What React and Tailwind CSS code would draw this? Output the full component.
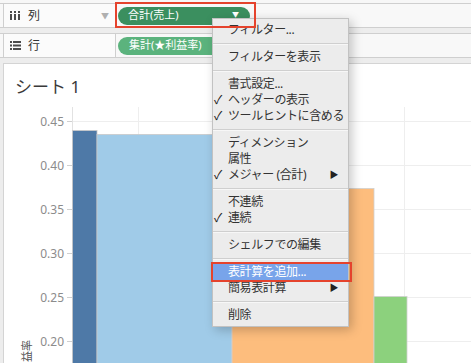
import React from 'react'

// Tableau 風: 列/行シェルフ + 棒グラフ + ピルのコンテキストメニュー
const MENU = [
  { t: 'フィルター...' },
  { sep: true },
  { t: 'フィルターを表示' },
  { sep: true },
  { t: '書式設定...' },
  { t: 'ヘッダーの表示', check: true },
  { t: 'ツールヒントに含める', check: true },
  { sep: true },
  { t: 'ディメンション' },
  { t: '属性' },
  { t: 'メジャー (合計)', check: true, sub: true },
  { sep: true },
  { t: '不連続' },
  { t: '連続', check: true },
  { sep: true },
  { t: 'シェルフでの編集' },
  { sep: true },
  { t: '表計算を追加...', active: true },
  { t: '簡易表計算', sub: true },
  { sep: true },
  { t: '削除' },
]

const TICKS = ['0.45', '0.40', '0.35', '0.30', '0.25', '0.20']

function ColsIcon() {
  return (
    <svg width="11" height="9" viewBox="0 0 11 9" className="fill-[#4a4a4a]">
      {[0, 4, 8].map((x) => (
        <g key={x}>
          <rect x={x} y="0" width="2" height="2" />
          <rect x={x} y="3" width="2" height="6" />
        </g>
      ))}
    </svg>
  )
}

function RowsIcon() {
  return (
    <svg width="11" height="9" viewBox="0 0 11 9" className="fill-[#4a4a4a]">
      {[0, 3.5, 7].map((y) => (
        <g key={y}>
          <rect x="0" y={y} width="2" height="2" />
          <rect x="3" y={y} width="8" height="2" />
        </g>
      ))}
    </svg>
  )
}

function Shelf({ icon, label, arrow, children }) {
  return (
    <div className="flex h-[25px] border-y border-[#cfcfcf] bg-[#f8f8f8]">
      <div className="ml-[3px] flex w-[113px] shrink-0 items-center border-x border-[#cfcfcf] bg-[#fbfbfb] pl-[6px]">
        {icon}
        <span className="ml-[7px] text-[12px] text-[#333]">{label}</span>
        {arrow && <span className="ml-auto mr-[6px] text-[8px] text-[#b0b0b0]">▼</span>}
      </div>
      <div className="flex items-center pl-[2px]">{children}</div>
    </div>
  )
}

function Chart() {
  const y = (i) => 121.5 + i * 44
  return (
    <svg width="467" height="259" viewBox="4 104 467 259" className="block">
      {[138.5, 271.5, 404.5].map((x) => (
        <line key={x} x1={x} y1="107" x2={x} y2="363" stroke="#eeeeee" />
      ))}
      {TICKS.map((t, i) => (
        <g key={t}>
          <line x1="72" y1={y(i)} x2="471" y2={y(i)} stroke="#eeeeee" />
          <line x1="67" y1={y(i)} x2="72" y2={y(i)} stroke="#d0d0d0" />
          <text x="64" y={y(i) + 4} textAnchor="end" fontSize="12" fill="#8c8c8c">
            {t}
          </text>
        </g>
      ))}
      <line x1="72.5" y1="107" x2="72.5" y2="363" stroke="#e2e2e2" />
      <rect x="72.5" y="130.5" width="24.5" height="240" fill="#4e79a7" stroke="#c9c9c9" strokeWidth="0.8" />
      <rect x="97" y="134.5" width="135" height="240" fill="#a0cbe8" stroke="#c9c9c9" strokeWidth="0.8" />
      <rect x="232" y="188.5" width="142" height="200" fill="#fdbd7d" stroke="#d0d0d0" strokeWidth="0.8" />
      <rect x="374" y="296.5" width="33" height="100" fill="#8cd17d" stroke="#d0d0d0" strokeWidth="0.8" />
      <text x="31" y="340" transform="rotate(-90 31 340)" textAnchor="end" fontSize="11" fill="#555">
        ★利益率
      </text>
    </svg>
  )
}

function Menu() {
  return (
    <div className="absolute left-[212px] top-[18px] w-[137px] border border-[#c2c2c2] bg-[#ececec] pb-[3px] pt-[3px] shadow-[3px_3px_10px_rgba(0,0,0,0.22)]">
      {MENU.map((m, i) =>
        m.sep ? (
          <div key={i} className="flex h-[11px] items-center">
            <div className="h-[2px] w-full border-t border-b border-t-[#cfcfcf] border-b-[#f7f7f7]" />
          </div>
        ) : (
          <div
            key={i}
            className={`flex h-[16px] items-center text-[12px] leading-[16px] tracking-[-0.4px] ${
              m.active ? 'bg-[#78a4ea] text-white' : 'text-[#333]'
            }`}
          >
            <span className="w-[15px] shrink-0 pl-[1px] text-[12px] text-[#222]">{m.check ? '✓' : ''}</span>
            <span>{m.t}</span>
            {m.sub && <span className="ml-auto mr-[10px] text-[9px] text-[#222]">▶</span>}
          </div>
        )
      )}
    </div>
  )
}

export default function App() {
  return (
    <div className="relative flex h-[363px] w-[471px] flex-col overflow-hidden bg-[#ededed] font-['Noto_Sans','Noto_Sans_CJK_JP',sans-serif]">
      <div className="h-[3px] shrink-0 bg-[#f7f7f7]" />
      <Shelf icon={<ColsIcon />} label="列" arrow>
        <div className="flex h-[18px] w-[132px] items-center rounded-full bg-[#3b8f5f] pl-[10px] pr-[11px] text-[11px] text-white">
          <span>合計(売上)</span>
          <span className="ml-auto text-[7px]">▼</span>
        </div>
      </Shelf>
      <div className="h-[5px] shrink-0" />
      <Shelf icon={<RowsIcon />} label="行">
        <div className="flex h-[18px] w-[140px] items-center rounded-full bg-[#5bb37d] pl-[11px] text-[11px] text-white">
          集計(★利益率)
        </div>
      </Shelf>
      <div className="h-[5px] shrink-0" />
      <div className="ml-[3px] flex flex-1 flex-col border-l border-t border-[#d4d4d4] bg-white">
        <div className="pb-[5px] pl-[11px] pt-[11px] text-[17px] leading-[24px] text-[#3a3a3a]">シート 1</div>
        <Chart />
      </div>

      <Menu />
      <div className="absolute left-[115px] top-[2px] h-[26px] w-[141px] border-2 border-[#e5432d]" />
      <div className="absolute left-[211px] top-[262px] h-[20px] w-[141px] border-2 border-[#e5432d]" />
    </div>
  )
}
